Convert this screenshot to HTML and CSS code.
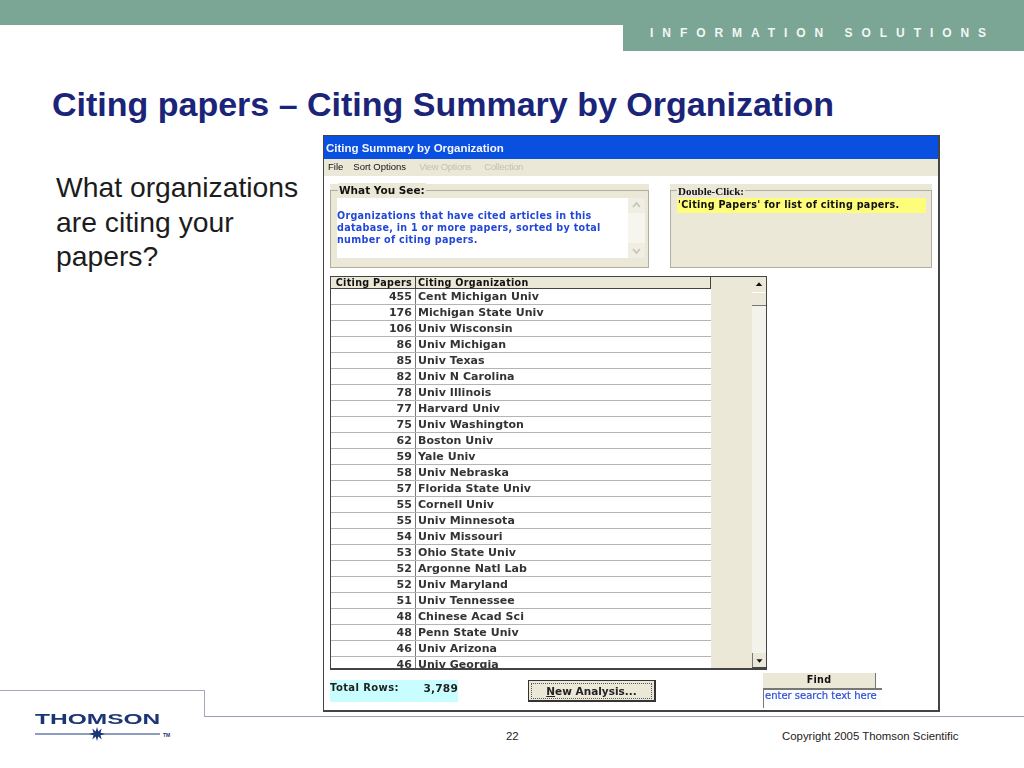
FILE: index.html
```html
<!DOCTYPE html>
<html lang="en">
<head>
<meta charset="utf-8">
<title>Citing papers</title>
<link rel="stylesheet" href="styles.css">
</head>
<body>
<div class="slide">
  <header class="top">
    <div class="tab">INFORMATION SOLUTIONS</div>
  </header>
  <h1 class="title">Citing papers – Citing Summary by Organization</h1>
  <p class="question">What organizations are citing your papers?</p>

  <section class="win">
    <div class="win-title">Citing Summary by Organization</div>
    <nav class="menu">
      <span>File</span><span>Sort Options</span>
      <span class="off">View Options</span><span class="off">Collection</span>
    </nav>
    <div class="win-body">
      <div class="panels">
        <div class="panel panel-see">
          <div class="legend">What You See:</div>
          <div class="see-box">
            <p class="see-text">Organizations that have cited articles in this database, in 1 or more papers, sorted by total number of citing papers.</p>
            <div class="mini-scroll">
              <svg class="mini-btn" viewBox="0 0 17 15"><path d="M5 9l3.5-4L12 9" fill="none" stroke="#c4c2b4" stroke-width="1.5"/></svg>
              <div class="mini-track"></div>
              <svg class="mini-btn" viewBox="0 0 17 15"><path d="M5 6l3.5 4L12 6" fill="none" stroke="#c4c2b4" stroke-width="1.5"/></svg>
            </div>
          </div>
        </div>
        <div class="panel panel-dbl">
          <div class="legend legend-serif">Double-Click:</div>
          <div class="hint">'Citing Papers' for list of citing papers.</div>
        </div>
      </div>

      <div class="table">
        <div class="cols">
          <div class="row head"><span class="num">Citing Papers</span><span class="org">Citing Organization</span></div>
          <div class="row"><span class="num">455</span><span class="org">Cent Michigan Univ</span></div>
          <div class="row"><span class="num">176</span><span class="org">Michigan State Univ</span></div>
          <div class="row"><span class="num">106</span><span class="org">Univ Wisconsin</span></div>
          <div class="row"><span class="num">86</span><span class="org">Univ Michigan</span></div>
          <div class="row"><span class="num">85</span><span class="org">Univ Texas</span></div>
          <div class="row"><span class="num">82</span><span class="org">Univ N Carolina</span></div>
          <div class="row"><span class="num">78</span><span class="org">Univ Illinois</span></div>
          <div class="row"><span class="num">77</span><span class="org">Harvard Univ</span></div>
          <div class="row"><span class="num">75</span><span class="org">Univ Washington</span></div>
          <div class="row"><span class="num">62</span><span class="org">Boston Univ</span></div>
          <div class="row"><span class="num">59</span><span class="org">Yale Univ</span></div>
          <div class="row"><span class="num">58</span><span class="org">Univ Nebraska</span></div>
          <div class="row"><span class="num">57</span><span class="org">Florida State Univ</span></div>
          <div class="row"><span class="num">55</span><span class="org">Cornell Univ</span></div>
          <div class="row"><span class="num">55</span><span class="org">Univ Minnesota</span></div>
          <div class="row"><span class="num">54</span><span class="org">Univ Missouri</span></div>
          <div class="row"><span class="num">53</span><span class="org">Ohio State Univ</span></div>
          <div class="row"><span class="num">52</span><span class="org">Argonne Natl Lab</span></div>
          <div class="row"><span class="num">52</span><span class="org">Univ Maryland</span></div>
          <div class="row"><span class="num">51</span><span class="org">Univ Tennessee</span></div>
          <div class="row"><span class="num">48</span><span class="org">Chinese Acad Sci</span></div>
          <div class="row"><span class="num">48</span><span class="org">Penn State Univ</span></div>
          <div class="row"><span class="num">46</span><span class="org">Univ Arizona</span></div>
          <div class="row"><span class="num">46</span><span class="org">Univ Georgia</span></div>
        </div>
        <div class="filler"></div>
        <div class="vscroll">
          <div class="vbtn"><svg viewBox="0 0 15 15"><path d="M4 9h7L7.500 5z" fill="#111"/></svg></div>
          <div class="vthumb"></div>
          <div class="vtrack"></div>
          <div class="vbtn vbtn-down"><svg viewBox="0 0 15 15"><path d="M4 6h7L7.500 10z" fill="#111"/></svg></div>
        </div>
      </div>

      <div class="bottom">
        <div class="total"><span>Total Rows:</span><span class="total-num">3,789</span></div>
        <div class="btn"><span class="btn-in"><u>N</u>ew Analysis...</span></div>
        <div class="find">
          <div class="find-head">Find</div>
          <div class="find-input">enter search text here</div>
        </div>
      </div>
    </div>
  </section>

  <div class="logo-box">
    <div class="logo">
      <div class="logo-word">THOMSON</div>
      <div class="logo-mark">
        <svg width="137" height="14" viewBox="0 0 137 14">
          <path d="M0 7h125" stroke="#1f3a80" stroke-width="1.2"/>
          <path d="M62 0l1.300 4.600 3.400-3.100-1.200 4.300 4.500 1.200-4.500 1.200 1.200 4.300-3.400-3.100L62 14l-1.300-4.600-3.400 3.100 1.200-4.300L54 7l4.500-1.200-1.200-4.300 3.400 3.100z" fill="#1a3478"/>
        </svg>
        <span class="tm">TM</span>
      </div>
    </div>
  </div>

  <footer class="foot">
    <span class="page-no">22</span>
    <span class="copy">Copyright 2005 Thomson Scientific</span>
  </footer>
</div>
</body>
</html>
```
FILE: styles.css
```css
* { box-sizing: border-box; }
html, body { margin: 0; padding: 0; background: #fff; }
body { font-family: "Liberation Sans", Arial, sans-serif; color: #111; overflow: hidden; }

.slide {
  width: 1024px;
  height: 768px;
  display: grid;
  grid-template-columns: 205px 118px 617px 84px;
  grid-template-rows: 51px 84px 555px 26px 52px;
}

/* top band */
.top {
  grid-column: 1 / -1;
  grid-row: 1;
  background: linear-gradient(#7ba696 25px, transparent 25px);
  padding-left: 623px;
}
.tab {
  height: 51px;
  background: #7ba696;
  padding: 26px 0 0 27px;
  color: #f2f7f4;
  font-size: 12px;
  font-weight: bold;
  line-height: 15px;
  letter-spacing: 8.95px;
  white-space: nowrap;
  overflow: hidden;
}
.title {
  grid-column: 1 / -1;
  grid-row: 2;
  margin: 0;
  padding: 35px 0 0 52px;
  font-size: 34px;
  line-height: 37px;
  font-weight: bold;
  color: #1a2478;
  white-space: nowrap;
}
.question {
  grid-column: 1 / 3;
  grid-row: 3;
  margin: 0;
  padding: 35px 15px 0 56px;
  font-size: 28.3px;
  line-height: 34.6px;
  color: #1c1c1c;
}

/* application window */
.win {
  grid-column: 3;
  grid-row: 3 / 5;
  align-self: start;
  height: 577px;
  background: #fff;
  border: 1px solid #444;
  border-right-width: 2px;
  border-bottom-width: 2px;
  font-family: "DejaVu Sans", Verdana, sans-serif;
  display: flex;
  flex-direction: column;
  filter: blur(0.35px);
}
.win-title {
  height: 23px;
  flex: none;
  background: #0a50e0;
  color: #f4f6ff;
  font-family: "Liberation Sans", Arial, sans-serif;
  font-weight: bold;
  font-size: 11.5px;
  letter-spacing: -0.02px;
  line-height: 25px;
  padding-left: 2px;
  white-space: nowrap;
}
.menu {
  height: 17px;
  flex: none;
  background: #ebe8d8;
  font-family: "Liberation Sans", Arial, sans-serif;
  font-size: 9.5px;
  line-height: 16px;
  padding-left: 4px;
  display: flex;
  gap: 10px;
}
.menu .off { color: #c2c0b4; margin-left: 3px; letter-spacing: -0.3px; }
.win-body { flex: 1; padding: 8px 0 0 6px; display: flex; flex-direction: column; min-height: 0; }

.panels { display: flex; gap: 21px; height: 84px; flex: none; }
.panel {
  background: #ebe8d8;
  height: 84px;
  position: relative;
  padding-top: 14px;
}
.panel::before {
  content: "";
  position: absolute;
  left: 0; right: 0; top: 6px; bottom: 0;
  border: 1px solid #b0ae9f;
}
.panel-see { width: 319px; padding-left: 7px; }
.panel-dbl { width: 262px; padding-left: 7px; }
.legend {
  position: absolute;
  z-index: 1;
  left: 8px;
  top: -1px;
  padding: 0 1px;
  background: #ebe8d8;
  font-size: 10.5px;
  font-weight: bold;
  line-height: 14px;
}
.legend-serif { font-family: "Liberation Serif", "Times New Roman", serif; font-size: 11px; left: 7px; top: 0; }
.see-box {
  position: relative;
  width: 308px;
  height: 60px;
  background: #fff;
  display: flex;
}
.see-text {
  margin: 0;
  width: 291px;
  padding: 12px 0 0 0;
  font-size: 9.6px;
  line-height: 12px;
  font-weight: bold;
  letter-spacing: 0.28px;
  color: #2348d8;
}
.mini-scroll { width: 17px; flex: none; display: flex; flex-direction: column; background: #f6f5ee; }
.mini-btn { width: 17px; height: 15px; background: #f0eee2; flex: none; display: block; }
.mini-track { flex: 1; }
.hint {
  position: relative;
  width: 249px;
  height: 15px;
  background: #fdfd7a;
  font-size: 9.6px;
  line-height: 14px;
  font-weight: bold;
  letter-spacing: 0.29px;
  white-space: nowrap;
  padding-left: 1px;
}

/* results table */
.table {
  margin-top: 8px;
  width: 437px;
  height: 394px;
  flex: none;
  border: 1px solid #444;
  border-bottom-width: 2px;
  display: flex;
  overflow: hidden;
}
.cols { width: 380px; flex: none; }
.row {
  display: grid;
  grid-template-columns: 85px 295px;
  height: 16px;
  border-bottom: 1px solid #b4b4b4;
  font-size: 11px;
  line-height: 15px;
  font-weight: bold;
  letter-spacing: 0.05px;
  color: #333;
  white-space: nowrap;
}
.row .num { text-align: right; padding-right: 3px; border-right: 1px solid #777; }
.row .org { padding-left: 2px; }
.row.head {
  height: 12px;
  background: #ebe8d8;
  border-bottom: 1px solid #444;
  font-size: 9.6px;
  line-height: 12px;
  letter-spacing: 0.3px;
  color: #111;
}
.row.head .num { border-right-color: #444; }
.row.head .org { border-right: 1px solid #444; }
.filler { width: 40px; flex: none; background: #ebe8d8; }
.vscroll { flex: 1; display: flex; flex-direction: column; background: #f4f3eb; border-left: 1px solid #ebe8d8; }
.vbtn { height: 15px; flex: none; background: #ebe8d8; }
.vbtn svg { display: block; width: 100%; height: 15px; }
.vthumb { height: 14px; flex: none; background: #ebe8d8; border-top: 1px solid #fff; border-bottom: 1px solid #777; }
.vtrack { flex: 1; }
.vbtn-down { border-bottom: 1px solid #444; border-left: 1px solid #777; }

/* bottom row */
.bottom { display: flex; align-items: flex-start; padding-top: 3px; }
.total {
  margin-top: 7px;
  width: 128px;
  height: 22px;
  background: #c8feff;
  display: flex;
  justify-content: space-between;
  font-size: 10px;
  font-weight: bold;
  letter-spacing: 0.4px;
  line-height: 15px;
  color: #222;
}
.total-num { font-size: 10.6px; letter-spacing: 0.2px; line-height: 16px; }
.btn {
  margin: 7px 0 0 70px;
  width: 128px;
  height: 22px;
  background: #ebe8d8;
  border: 1px solid #333;
  border-right-width: 2px;
  border-bottom-width: 2px;
  padding: 2px;
}
.btn-in {
  display: block;
  height: 16px;
  border: 1px dotted #555;
  text-align: center;
  font-size: 10.5px;
  font-weight: bold;
  line-height: 14px;
  color: #222;
}
.find { margin-left: 107px; width: 119px; }
.find-head {
  width: 113px;
  height: 15px;
  background: #ebe8d8;
  border-right: 1px solid #777;
  text-align: center;
  font-size: 9.6px;
  font-weight: bold;
  line-height: 13px;
  letter-spacing: 0.3px;
}
.find-input {
  height: 20px;
  border-left: 1px solid #777;
  border-top: 2px solid #777;
  font-size: 10px;
  line-height: 12px;
  color: #2f4ed8;
  -webkit-text-stroke: 0.2px #2f4ed8;
  padding-left: 1px;
  white-space: nowrap;
  background: #fcfdfe;
}

/* footer with logo */
.logo-box {
  grid-column: 1;
  grid-row: 4 / 6;
  border-top: 1px solid #a7a7c0;
  position: relative;
  padding: 21px 0 0 35px;
}
.logo-box::after {
  content: "";
  position: absolute;
  right: 0; top: 0;
  width: 1px;
  height: 26px;
  background: #a7a7c0;
}
.logo-word {
  font-size: 14.5px;
  font-weight: bold;
  line-height: 14px;
  color: #1c3674;
  width: 75px;
  transform-origin: left center;
  transform: scaleX(1.69);
  white-space: nowrap;
}
.logo-mark { display: flex; align-items: center; height: 14px; margin-top: 1px; }
.logo-mark svg { flex: none; width: 137px; margin-right: -9px; }
.tm { font-size: 5px; font-weight: bold; color: #1c3674; margin-top: 1px; }

.foot {
  grid-column: 2 / -1;
  grid-row: 5;
  border-top: 1px solid #9a9ab5;
  display: flex;
  font-size: 11.4px;
  line-height: 13px;
  padding: 13px 0 0 301px;
  color: #222;
}
.page-no { width: 276px; }
```
